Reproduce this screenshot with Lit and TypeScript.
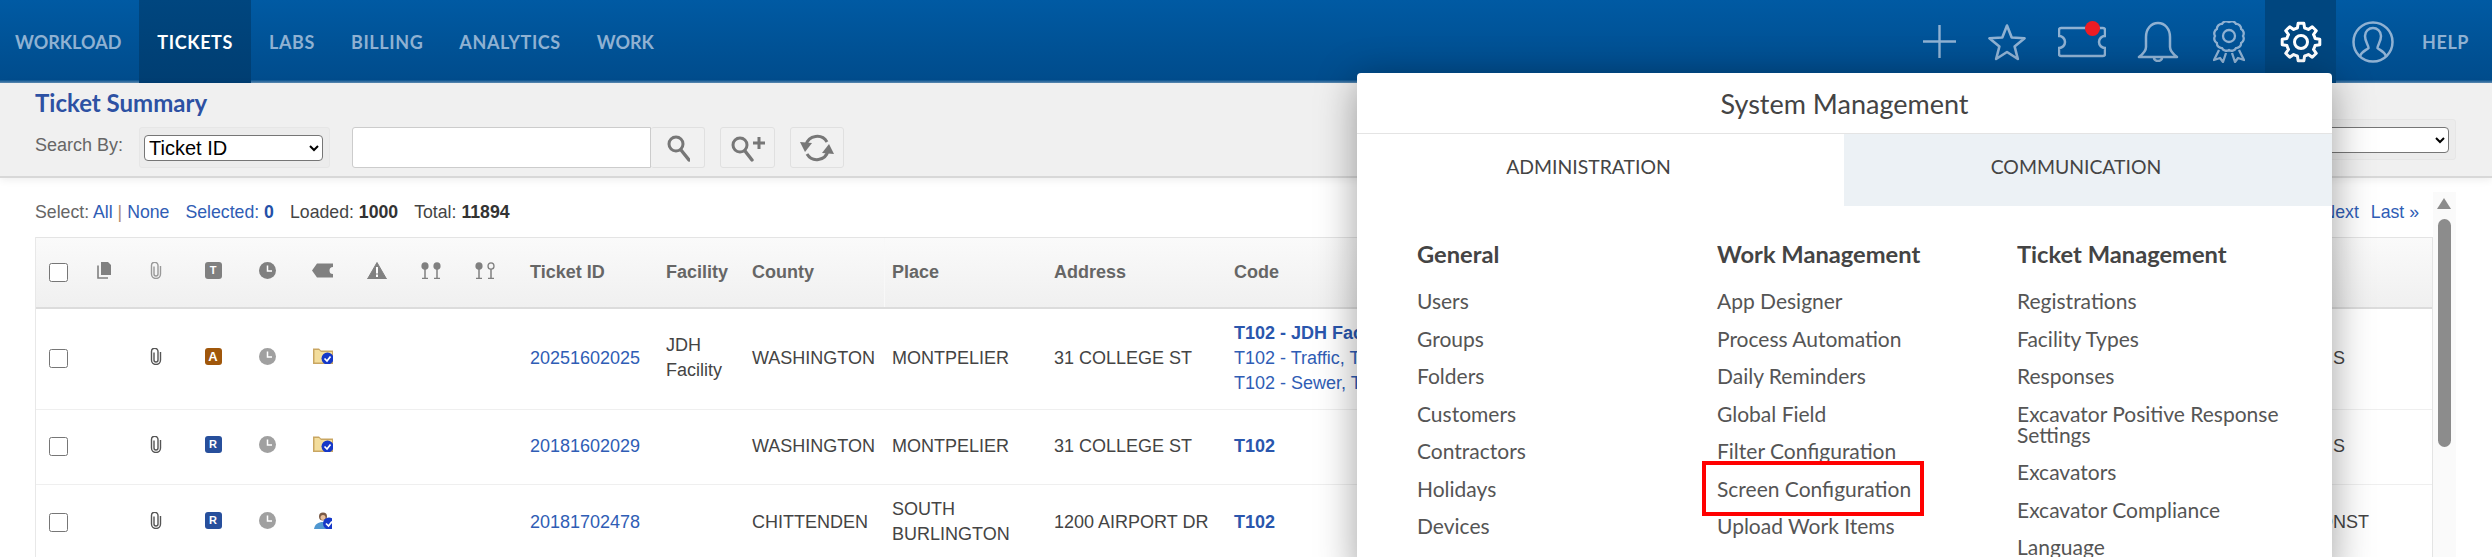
import { LitElement, html, css, svg } from "lit";
import { customElement } from "lit/decorators.js";

function gearPath(cx: number, cy: number, R: number, r: number, n: number) {
  let d = "";
  const pt = (rad: number, a: number) => `${(cx + rad * Math.cos(a)).toFixed(2)} ${(cy + rad * Math.sin(a)).toFixed(2)}`;
  for (let i = 0; i < n; i++) {
    const a = -Math.PI / 2 + (i * 2 * Math.PI) / n;
    d += `${i === 0 ? "M" : `A${r} ${r} 0 0 1 `}${pt(r, a - 0.25)} L${pt(R, a - 0.15)} L${pt(R, a + 0.15)} L${pt(r, a + 0.25)} `;
  }
  return d + `A${r} ${r} 0 0 1 ${pt(r, -Math.PI / 2 - 0.25)} Z`;
}
function scallop(cx: number, cy: number, R: number, n: number) {
  let d = "";
  for (let i = 0; i < n; i++) {
    const a = (i * 2 * Math.PI) / n;
    const x = cx + R * Math.cos(a), y = cy + R * Math.sin(a);
    d += i === 0 ? `M${x.toFixed(2)} ${y.toFixed(2)} ` : `A5 5 0 0 1 ${x.toFixed(2)} ${y.toFixed(2)} `;
  }
  return d + `A5 5 0 0 1 ${cx + R} ${cy} Z`;
}
function starPts(cx: number, cy: number, R: number, r: number) {
  const p: string[] = [];
  for (let i = 0; i < 10; i++) {
    const a = -Math.PI / 2 + (i * Math.PI) / 5;
    const rad = i % 2 ? r : R;
    p.push(`${(cx + rad * Math.cos(a)).toFixed(2)},${(cy + rad * Math.sin(a)).toFixed(2)}`);
  }
  return p.join(" ");
}

const navStroke = "#8fb1d2";
const icPlus = html`<svg width="33" height="33" viewBox="0 0 33 33"><path d="M16.5 0V33M0 16.5H33" fill="none" stroke="${navStroke}" stroke-width="2.4"/></svg>`;
const icStar = html`<svg width="42" height="38" viewBox="0 0 42 38"><polygon points="${starPts(21, 21, 18.5, 8)}" fill="none" stroke="${navStroke}" stroke-width="2.6" stroke-linejoin="round"/></svg>`;
const icTicket = html`<svg width="48" height="32" viewBox="0 0 48 32"><path d="M3 2H45a2 2 0 0 1 2 2V10a6 6 0 0 0 0 12V28a2 2 0 0 1-2 2H3a2 2 0 0 1-2-2V22a6 6 0 0 0 0-12V4a2 2 0 0 1 2-2Z" fill="none" stroke="${navStroke}" stroke-width="2.5"/></svg>`;
const icBell = html`<svg width="42" height="41" viewBox="0 0 42 41"><path d="M21 2C14 2 9 8 9 16V26C9 30 6 33 2 36H40C36 33 33 30 33 26V16C33 8 28 2 21 2ZM17 37a4 3 0 0 0 8 0" fill="none" stroke="${navStroke}" stroke-width="2.5" stroke-linejoin="round"/></svg>`;
const icRibbon = html`<svg width="32" height="42" viewBox="0 0 32 42"><path d="${scallop(16, 15, 14, 12)}" fill="none" stroke="${navStroke}" stroke-width="2.3"/><circle cx="16" cy="15" r="6" fill="none" stroke="${navStroke}" stroke-width="2.3"/><path d="M6 29L1 39L7 37L10 41L13 32M26 29L31 39L25 37L22 41L19 32" fill="none" stroke="${navStroke}" stroke-width="2.3" stroke-linejoin="round"/></svg>`;
const icGear = html`<svg width="42" height="42" viewBox="0 0 42 42"><path d="${gearPath(21, 21, 19, 14.5, 8)}" fill="none" stroke="#fff" stroke-width="3" stroke-linejoin="round"/><circle cx="21" cy="21" r="6.5" fill="none" stroke="#fff" stroke-width="3"/></svg>`;
const icPerson = html`<svg width="42" height="42" viewBox="0 0 42 42"><circle cx="21" cy="21" r="19.5" fill="none" stroke="${navStroke}" stroke-width="2.5"/><path d="M8 35C10 30 15 29 16.5 27C16.5 24 13 21 13 15C13 10 17 7 21 7C25 7 29 10 29 15C29 21 25.5 24 25.5 27C27 29 32 30 34 35" fill="none" stroke="${navStroke}" stroke-width="2.5"/></svg>`;

const icSearch = html`<svg width="24" height="28" viewBox="0 0 24 28"><circle cx="10" cy="10" r="7" fill="none" stroke="#777" stroke-width="3"/><path d="M15 16L23 26" stroke="#777" stroke-width="3.4" stroke-linecap="round"/></svg>`;
const icSearchPlus = html`<svg width="36" height="28" viewBox="0 0 36 28"><circle cx="10" cy="11" r="7" fill="none" stroke="#777" stroke-width="3"/><path d="M15 17L22 26" stroke="#777" stroke-width="3.4" stroke-linecap="round"/><path d="M29 3V15M23 9H35" stroke="#777" stroke-width="3"/></svg>`;
const icRefresh = html`<svg width="36" height="32" viewBox="0 0 36 32"><path d="M7 13A11.5 11.5 0 0 1 28 10M29 19A11.5 11.5 0 0 1 8 22" fill="none" stroke="#777" stroke-width="3"/><polygon points="1,10 13,11 6,20" fill="#777"/><polygon points="35,22 23,21 30,12" fill="#777"/></svg>`;

const H = "#808080";
const icCopy = html`<svg width="15" height="17" viewBox="0 0 15 17"><path d="M4 0H11L14 3V13H4Z" fill="${H}"/><path d="M1 3.5V16H11" fill="none" stroke="${H}" stroke-width="1.6"/></svg>`;
const clip = (c: string) => html`<svg width="12" height="17" viewBox="0 0 12 17"><path d="M4 4.5V12a2 2 0 0 0 4 0V3.5a3.2 3.2 0 0 0-6.5 0V12a4.5 4.5 0 0 0 9 0V4" fill="none" stroke="${c}" stroke-width="1.4"/></svg>`;
const clock = (c: string) => html`<svg width="17" height="17" viewBox="0 0 17 17"><circle cx="8.5" cy="8.5" r="8.5" fill="${c}"/><path d="M8.5 3.5V9H13" fill="none" stroke="#fff" stroke-width="1.5"/></svg>`;
const icTag = html`<svg width="22" height="15" viewBox="0 0 22 15"><path d="M5 0.5H21V4a3.5 3.5 0 0 0 0 7V14.5H5L0 7.5Z" fill="${H}"/></svg>`;
const icWarn = html`<svg width="20" height="17" viewBox="0 0 20 17"><path d="M10 0.5L19.5 17H0.5Z" fill="${H}" stroke="${H}" stroke-linejoin="round"/><rect x="9" y="5" width="2" height="6.5" fill="#fff"/><rect x="9" y="12.5" width="2" height="2.5" fill="#fff"/></svg>`;
const pin = (x: number, filled: boolean) => svg`<ellipse cx="${x}" cy="4" rx="${filled ? 3.6 : 3}" ry="${filled ? 3.8 : 3.2}" fill="${filled ? H : "#f6f6f6"}" stroke="${H}" stroke-width="${filled ? 0 : 1.3}"/><path d="M${x} 7V16M${x - 3} 16.5H${x + 3}" stroke="${H}" stroke-width="1.5"/>`;
const icPins = html`<svg width="20" height="17" viewBox="0 0 20 17">${pin(4, true)}${pin(16, true)}</svg>`;
const icPins2 = html`<svg width="20" height="17" viewBox="0 0 20 17">${pin(4, true)}${pin(16, false)}</svg>`;
const check = svg`<circle cx="14.5" cy="10.5" r="6" fill="#1538c8"/><path d="M11.5 10.5L14 13L17.5 8.5" fill="none" stroke="#fff" stroke-width="1.7"/>`;
const icFolder = html`<svg width="20" height="16" viewBox="0 0 20 16"><path d="M0 0.5H6L8 2.5H20V16H0Z" fill="#c9a662"/><path d="M1.5 2H6L8 4H19V14.5H1.5Z" fill="#f3dd9c"/>${check}</svg>`;
const icUser = html`<svg width="18" height="17" viewBox="0 0 18 17"><circle cx="9" cy="4.5" r="4" fill="#7a5a46"/><circle cx="9" cy="5.5" r="2.5" fill="#e8bf9c"/><path d="M0 17C1 12 4 10 9 10C13 10 16 12 17 17Z" fill="#4f97d0"/><g transform="translate(0.5,1)">${check}</g></svg>`;

const badge = (cls: string, t: string) => html`<span class="badge ${cls}">${t}</span>`;

const general = ["Users", "Groups", "Folders", "Customers", "Contractors", "Holidays", "Devices"];
const work = ["App Designer", "Process Automation", "Daily Reminders", "Global Field", "Filter Configuration", "Screen Configuration", "Upload Work Items"];
const ticket = ["Registrations", "Facility Types", "Responses", "Excavator Positive Response Settings", "Excavators", "Excavator Compliance", "Language"];

@customElement("app-root")
export class AppRoot extends LitElement {
  static styles = css`
    :host { display: block; position: relative; width: 2492px; height: 557px; overflow: hidden; background: #fff; font-family: "Liberation Sans", Arial, sans-serif; color: #444; }
    .nav { display: flex; height: 83px; background: linear-gradient(#005aa3 0%, #004c8c 96%, #5f8db5 100%); font-family: Lato, sans-serif; font-weight: 700; font-size: 18px; letter-spacing: .6px; color: #8fb1d2; }
    .tab { display: flex; align-items: center; padding: 0 18px; }
    .tab.first { padding-left: 15px; letter-spacing: 0; }
    .tab.tight { letter-spacing: 0; }
    .tab.on { color: #fff; background: linear-gradient(#00467f, #003e72); }
    .spacer { flex: 1; }
    .ni { display: flex; align-items: center; justify-content: center; position: relative; }
    .dot { position: absolute; left: 27px; top: 21px; width: 15px; height: 15px; border-radius: 50%; background: #ed1c24; }
    .geartile { width: 71px; background: #00467f; margin-left: 20px; }
    .gapa { margin-left: 30px; }
    .gapb { margin-left: 31px; }
    .gapc { margin-left: 34px; }
    .gapd { margin-left: 16px; }
    .help { width: 48px; margin-left: 28px; margin-right: 22px; display: flex; align-items: center; white-space: nowrap; }

    .sub { box-sizing: border-box; height: 95px; background: #f0f0f0; border-bottom: 2px solid #d8d8d8; padding: 9px 36px 0 35px; box-shadow: 0 2px 8px rgba(0,0,0,.07); position: relative; }
    h1 { margin: 0; font: 700 24px/22px Lato, sans-serif; color: #2d51a3; }
    .sbar { display: flex; height: 41px; margin-top: 13px; align-items: flex-start; }
    .lbl { width: 104px; font-size: 18px; line-height: 36px; color: #666; }
    .well { box-sizing: border-box; display: flex; align-items: center; height: 41px; padding: 0 6px 0 4px; background: #ececec; border: 1px solid #e6e6e6; border-radius: 3px; }
    .well select { height: 26px; font: 20px "Liberation Sans", Arial, sans-serif; color: #000; background: #fff; border: 1px solid #767676; border-radius: 4px; }
    .w1 select { width: 179px; }
    .w2 { margin-left: auto; margin-top: -8px; }
    .w2 select { width: 220px; }
    .input { box-sizing: border-box; width: 299px; height: 41px; margin-left: 22px; background: #fff; border: 1px solid #ccc; border-radius: 3px 0 0 3px; }
    .btn { box-sizing: border-box; display: flex; align-items: center; justify-content: center; height: 41px; border: 1px solid #e0e0e0; border-radius: 3px; background: #f1f1f1; }
    .b1 { width: 54px; border-left: none; }
    .b2 { width: 55px; margin-left: 15px; }
    .b3 { width: 54px; margin-left: 15px; }

    .content { display: flex; align-items: flex-start; }
    .left { box-sizing: border-box; width: 2433px; padding-left: 35px; }
    .stats { box-sizing: content-box; display: flex; height: 20px; padding: 24px 14px 15px 0; font-size: 17.7px; line-height: 20px; color: #444; gap: 16px; white-space: pre; }
    .stats .mute { color: #666; }
    .stats a, .tid, .lnk { color: #2f5db5; }
    .stats b { color: #333; }
    .stats .blue b { color: #2450a8; }
    .sep { color: #b08a70; }
    .pager { margin-left: auto; display: flex; gap: 12px; }
    .scroll { position: relative; box-sizing: border-box; width: 23px; height: 365px; margin-top: 14px; background: #fafafa; }
    .arrow { position: absolute; left: 4px; top: 6px; width: 0; height: 0; border-left: 7.5px solid transparent; border-right: 7.5px solid transparent; border-bottom: 11px solid #8c8c8c; }
    .thumb { position: absolute; left: 5px; top: 27px; width: 13px; height: 228px; border-radius: 7px; background: #8c8c8c; }

    .table { border-left: 1px solid #e8e8e8; border-right: 1px solid #e4e4e4; font-size: 18px; line-height: 25px; }
    .tr { display: grid; grid-template-columns: 41px 54px 50px 64px 44px 68px 40px 68px 40px 161px 86px 140px 162px 180px 1099px 99px; align-items: center; border-bottom: 1px solid #efefef; }
    .th { box-sizing: border-box; height: 72px; background: linear-gradient(#fafafa, #f0f0f0); border-top: 1px solid #e4e4e4; border-bottom: 2px solid #dcdcdc; font-weight: 700; color: #666; align-items: stretch; }
    .th > div { display: flex; align-items: center; }
    .th .place { border-left: 1px solid #f8f8f8; margin-left: -8px; padding-left: 7px; }
    .h1, .h2, .h3 { box-sizing: border-box; padding-bottom: 2px; }
    .h1 { height: 101px; }
    .h2 { height: 75px; }
    .h3 { height: 77px; }
    .ck { padding-left: 13px; display: flex; align-items: center; }
    .ck input { width: 19px; height: 19px; margin: 0; }
    .ic { display: flex; justify-content: center; align-items: center; height: 17px; margin-bottom: 4px; }
    .th .ic { align-self: center; }
    .tidc { padding-left: 25px; }
    .badge { display: flex; align-items: center; justify-content: center; width: 17px; height: 17px; border-radius: 3px; color: #fff; font: 700 11px/17px "Liberation Sans", Arial, sans-serif; }
    .bt { background: #808080; }
    .ba { background: #a0570b; font-size: 13px; }
    .br { background: #274f9c; }
    .code b { color: #2a56ad; }
    .nw { white-space: nowrap; }
    .shift { margin-left: -14px; }

    .panel { position: absolute; left: 1357px; top: 73px; width: 975px; height: 500px; background: #fff; border-radius: 4px 4px 0 0; box-shadow: 0 8px 40px rgba(0,0,0,.38); font-family: Lato, sans-serif; color: #444; z-index: 5; }
    .ptitle { box-sizing: border-box; height: 61px; display: flex; align-items: center; justify-content: center; border-bottom: 1px solid #e4e4e4; font-size: 27px; }
    .ptabs { display: grid; grid-template-columns: 487px 488px; height: 72px; font-size: 19.4px; }
    .ptabs div { display: flex; align-items: center; justify-content: center; padding: 0 24px 8px 0; }
    .ptabs .off { background: #ecf1f5; }
    .pcols { display: grid; grid-template-columns: 300px 300px 300px; padding: 35px 0 0 60px; }
    h3 { margin: 0 0 23px; font: 700 23.7px/26px Lato, sans-serif; color: #444; }
    .it { position: relative; font-size: 21px; line-height: 21px; margin-bottom: 16.5px; max-width: 275px; color: #555; }
    .hl { position: absolute; left: -15px; top: -16.5px; width: 222px; height: 55px; box-sizing: border-box; border: 4px solid #f00; }
  `;

  row(h: string, cb: unknown, icon: unknown, id: string, fac: unknown, county: string, place: unknown, addr: string, code: unknown, st: unknown) {
    return html`<div class="tr ${h}">
      <div class="ck"><input type="checkbox" /></div><div></div>
      <div class="ic">${clip("#555")}</div><div class="ic">${cb}</div><div class="ic">${clock("#a0a0a0")}</div><div class="ic">${icon}</div><div></div><div></div><div></div>
      <div class="tidc"><span class="tid">${id}</span></div><div>${fac}</div><div>${county}</div><div>${place}</div><div>${addr}</div><div class="code nw">${code}</div><div class="nw">${st}</div>
    </div>`;
  }

  render() {
    return html`
      <div class="nav">
        <div class="tab first">WORKLOAD</div><div class="tab on">TICKETS</div><div class="tab">LABS</div><div class="tab">BILLING</div><div class="tab">ANALYTICS</div><div class="tab tight">WORK</div>
        <div class="spacer"></div>
        <div class="ni">${icPlus}</div>
        <div class="ni gapa">${icStar}</div>
        <div class="ni gapa">${icTicket}<span class="dot"></span></div>
        <div class="ni gapb">${icBell}</div>
        <div class="ni gapc">${icRibbon}</div>
        <div class="ni geartile">${icGear}</div>
        <div class="ni gapd">${icPerson}</div>
        <div class="help">HELP</div>
      </div>
      <div class="sub">
        <h1>Ticket Summary</h1>
        <div class="sbar">
          <div class="lbl">Search By:</div>
          <div class="well w1"><select><option>Ticket ID</option></select></div>
          <div class="input"></div>
          <div class="btn b1">${icSearch}</div>
          <div class="btn b2">${icSearchPlus}</div>
          <div class="btn b3">${icRefresh}</div>
          <div class="well w2"><select><option></option></select></div>
        </div>
      </div>
      <div class="content">
        <div class="left">
          <div class="stats">
            <span class="mute">Select: <a>All</a> <span class="sep">|</span> <a>None</a></span>
            <span class="blue"><a>Selected: <b>0</b></a></span>
            <span>Loaded: <b>1000</b></span>
            <span>Total: <b>11894</b></span>
            <span class="pager"><a>Next</a><a>Last »</a></span>
          </div>
          <div class="table">
            <div class="tr th">
              <div class="ck"><input type="checkbox" /></div>
              <div class="ic">${icCopy}</div><div class="ic">${clip("#999")}</div><div class="ic">${badge("bt", "T")}</div><div class="ic">${clock(H)}</div><div class="ic">${icTag}</div><div class="ic">${icWarn}</div><div class="ic">${icPins}</div><div class="ic">${icPins2}</div>
              <div class="tidc">Ticket ID</div><div>Facility</div><div>County</div><div class="place">Place</div><div>Address</div><div>Code</div><div></div>
            </div>
            ${this.row("h1", badge("ba", "A"), icFolder, "20251602025", html`JDH<br />Facility`, "WASHINGTON", "MONTPELIER", "31 COLLEGE ST",
              html`<b>T102 - JDH Facility</b><br /><span class="lnk">T102 - Traffic, T102</span><br /><span class="lnk">T102 - Sewer, T102</span>`, "S")}
            ${this.row("h2", badge("br", "R"), icFolder, "20181602029", "", "WASHINGTON", "MONTPELIER", "31 COLLEGE ST", html`<b>T102</b>`, "S")}
            ${this.row("h3", badge("br", "R"), icUser, "20181702478", "", "CHITTENDEN", html`SOUTH<br />BURLINGTON`, "1200 AIRPORT DR", html`<b>T102</b>`, html`<div class="shift">ONST</div>`)}
          </div>
        </div>
        <div class="scroll"><div class="arrow"></div><div class="thumb"></div></div>
      </div>
      <div class="panel">
        <div class="ptitle">System Management</div>
        <div class="ptabs"><div>ADMINISTRATION</div><div class="off">COMMUNICATION</div></div>
        <div class="pcols">
          <div><h3>General</h3>${general.map((t) => html`<div class="it">${t}</div>`)}</div>
          <div><h3>Work Management</h3>${work.map((t) => html`<div class="it">${t}${t === "Screen Configuration" ? html`<div class="hl"></div>` : ""}</div>`)}</div>
          <div><h3>Ticket Management</h3>${ticket.map((t) => html`<div class="it">${t}</div>`)}</div>
        </div>
      </div>
    `;
  }
}
